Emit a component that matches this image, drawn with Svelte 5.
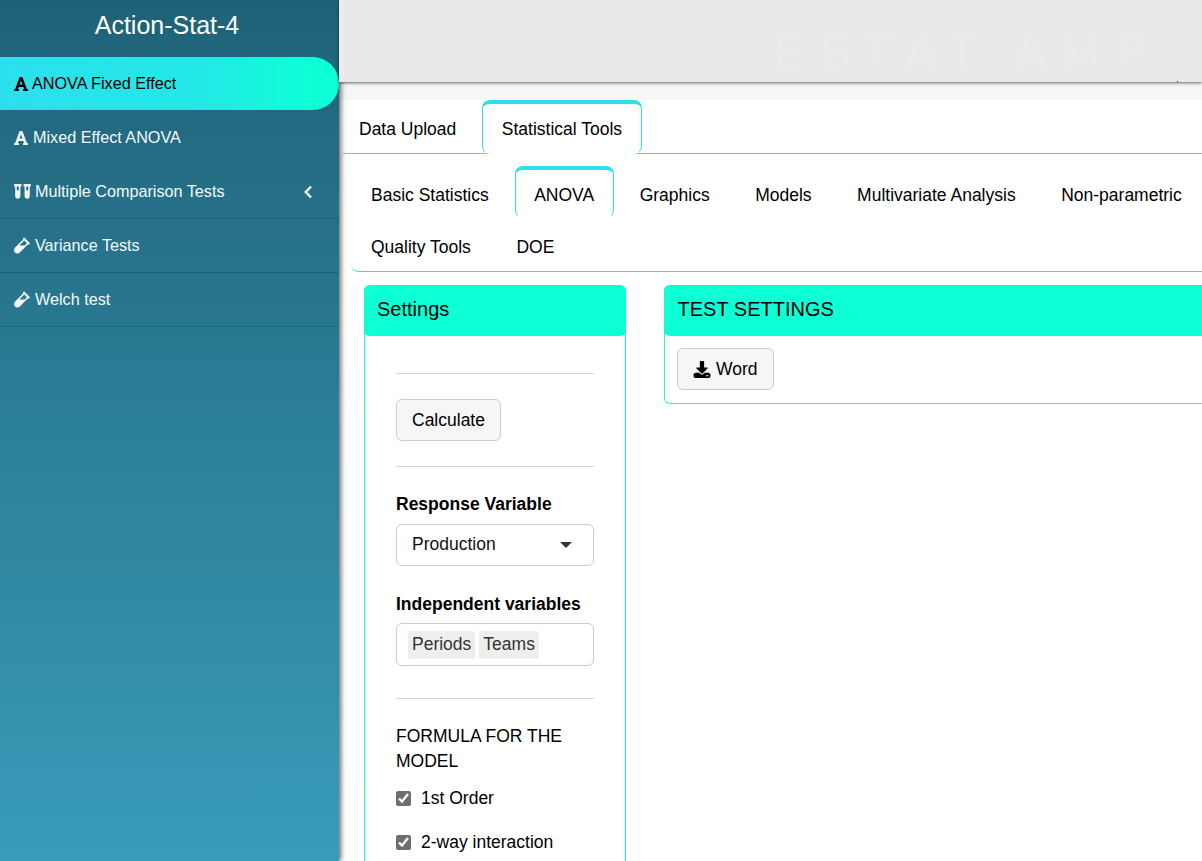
<script lang="ts">
	const icons = {
		font: { box: '0 32 448 448', d: 'M432 416h-23.41L277.88 53.69A32 32 0 0 0 247.58 32h-47.16a32 32 0 0 0-30.3 21.69L39.41 416H16a16 16 0 0 0-16 16v32a16 16 0 0 0 16 16h128a16 16 0 0 0 16-16v-32a16 16 0 0 0-16-16h-19.58l23.3-64h152.56l23.3 64H304a16 16 0 0 0-16 16v32a16 16 0 0 0 16 16h128a16 16 0 0 0 16-16v-32a16 16 0 0 0-16-16zM176.85 272L224 142.51 271.15 272z', kind: 'font' },
		vial: { box: '0 0 480 512', d: 'M477.7 186.1L309.5 18.3c-3.1-3.1-8.2-3.1-11.3 0l-34 33.9c-3.1 3.1-3.1 8.2 0 11.3l11.2 11.1L33 316.5c-38.8 38.7-45.1 102-9.4 143.5 20.6 24 49.5 36 78.4 35.9 26.4 0 52.8-10 72.9-30.1l246.3-245.7 11.2 11.1c3.1 3.1 8.2 3.1 11.3 0l34-33.9c3-3.1 3-8.1-.1-11.2zM318 256H161l148-147.7 78.5 78.3L318 256z', kind: 'vial' },
		vials: { box: '60 0 520 390', d: 'M72 64h24v240c0 44.1 35.9 80 80 80s80-35.9 80-80V64h24c4.4 0 8-3.6 8-8V8c0-4.4-3.6-8-8-8H72c-4.4 0-8 3.6-8 8v48c0 4.4 3.6 8 8 8zm72 0h64v96h-64V64zM360 64h24v240c0 44.1 35.9 80 80 80s80-35.9 80-80V64h24c4.4 0 8-3.6 8-8V8c0-4.4-3.6-8-8-8H360c-4.4 0-8 3.6-8 8v48c0 4.4 3.6 8 8 8zm72 0h64v96h-64V64z', kind: 'vials' }
	};

	const menu = [
		{ label: 'ANOVA Fixed Effect', icon: icons.font, active: true },
		{ label: 'Mixed Effect ANOVA', icon: icons.font },
		{ label: 'Multiple Comparison Tests', icon: icons.vials, chevron: true },
		{ label: 'Variance Tests', icon: icons.vial },
		{ label: 'Welch test', icon: icons.vial }
	];

	const topTabs = ['Data Upload', 'Statistical Tools'];
	const subTabs = ['Basic Statistics', 'ANOVA', 'Graphics', 'Models', 'Multivariate Analysis', 'Non-parametric', 'Quality Tools', 'DOE'];
</script>

<div class="page">
	<aside class="sidebar">
		<div class="brand">Action-Stat-4</div>
		<nav>
			{#each menu as item}
				<div class="item" class:active={item.active}>
					<svg class="icon {item.icon.kind}" viewBox={item.icon.box} preserveAspectRatio="none" aria-hidden="true"><path fill="currentColor" d={item.icon.d} /></svg>
					<span>{item.label}</span>
					{#if item.chevron}
						<svg class="chevron" viewBox="0 0 10 14" aria-hidden="true"><path d="M8 1.5 2.8 7 8 12.5" fill="none" stroke="currentColor" stroke-width="2.4" /></svg>
					{/if}
				</div>
			{/each}
		</nav>
	</aside>

	<main class="main">
		<header class="topbar">
			<span class="watermark">ESTAT AMP</span>
			<i class="speck"></i>
		</header>
		<div class="band"></div>

		<div class="tabs top">
			{#each topTabs as tab}
				<div class="tab" class:active={tab === 'Statistical Tools'}>{tab}</div>
			{/each}
		</div>

		<div class="tabs sub">
			{#each subTabs as tab}
				<div class="tab" class:active={tab === 'ANOVA'}>{tab}</div>
			{/each}
		</div>

		<div class="content">
			<section class="card settings">
				<h2>Settings</h2>
				<div class="card-body">
					<hr />
					<button type="button">Calculate</button>
					<hr />
					<p class="label">Response Variable</p>
					<div class="field select">
						<span>Production</span>
						<i class="caret"></i>
					</div>
					<p class="label second">Independent variables</p>
					<div class="field chips">
						<span class="chip">Periods</span>
						<span class="chip">Teams</span>
					</div>
					<hr class="wide-gap" />
					<p class="formula">FORMULA FOR THE MODEL</p>
					<label class="check"><input type="checkbox" checked /> 1st Order</label>
					<label class="check"><input type="checkbox" checked /> 2-way interaction</label>
				</div>
			</section>

			<section class="card results">
				<h2>TEST SETTINGS</h2>
				<div class="results-body">
					<button type="button">
						<svg viewBox="0 0 512 512" aria-hidden="true"><path fill="currentColor" fill-rule="evenodd" d="M216 0h80c13.3 0 24 10.7 24 24v168h87.7c17.8 0 26.7 21.5 14.1 34.1L269.7 378.3c-7.5 7.5-19.8 7.5-27.3 0L90.1 226.1c-12.6-12.6-3.7-34.1 14.1-34.1H192V24c0-13.3 10.7-24 24-24zM70 352h100l49 49c20 20 52 20 72 0l49-49h102c38 0 70 32 70 70v20c0 38-32 70-70 70H70c-38 0-70-32-70-70v-20c0-38 32-70 70-70zm310 76v34h74v-34z" /></svg>
						Word
					</button>
				</div>
			</section>
		</div>
	</main>
</div>

<style>
	:global(body) {
		margin: 0;
		font-family: 'Liberation Sans', Arial, sans-serif;
		color: #000;
		background: #fff;
	}

	.page {
		display: flex;
		height: 861px;
		overflow: hidden;
	}

	.sidebar {
		flex: 0 0 339px;
		position: relative;
		z-index: 1;
		background: linear-gradient(#1f6278, #399cb9);
		box-shadow: 2px 0 5px rgba(0, 0, 0, 0.6);
		color: #f4f8fa;
	}

	.brand {
		height: 57px;
		padding: 0 5px 6px 0;
		box-sizing: border-box;
		display: flex;
		align-items: center;
		justify-content: center;
		font-size: 25px;
		color: #fff;
	}

	.item {
		height: 54px;
		box-sizing: border-box;
		padding: 0 14px;
		display: flex;
		align-items: center;
		gap: 4px;
		font-size: 16.2px;
		border-bottom: 1px solid rgba(20, 70, 100, 0.4);
	}

	.item:nth-child(-n + 2) {
		border-bottom-color: transparent;
	}

	.item.active {
		height: 53px;
		margin-bottom: 1px;
		padding-top: 1px;
		gap: 3px;
		color: #000;
		background: linear-gradient(90deg, #2cdfee 0%, #22e8e6 60%, #0dffd6 92%);
		border-radius: 0 27px 27px 0;
	}

	.icon {
		flex: none;
	}

	.icon.font {
		width: 14px;
		height: 14px;
		margin-right: 1px;
	}

	.icon.vial {
		width: 16px;
		height: 17px;
		margin-right: 1px;
	}

	.icon.vials {
		width: 17px;
		height: 15px;
	}

	.chevron {
		width: 10px;
		height: 14px;
		margin-left: auto;
		margin-right: 12px;
	}

	.main {
		flex: 1;
		min-width: 0;
	}

	.topbar {
		position: relative;
		z-index: 2;
		height: 82px;
		box-sizing: border-box;
		padding-left: 429px;
		border-left: 5px solid #ececec;
		background: #e9e9e9;
		box-shadow: 0 1px 3px rgba(0, 0, 0, 0.6);
		overflow: hidden;
		white-space: nowrap;
	}

	.watermark {
		display: block;
		padding-top: 27px;
		font-size: 48px;
		line-height: 50px;
		letter-spacing: 14px;
		color: #ebebeb;
	}

	.speck {
		position: absolute;
		left: 833px;
		bottom: 0;
		width: 1px;
		height: 1px;
		background: #222;
	}

	.band {
		height: 18px;
		background: #f6f6f6;
	}

	.tabs {
		display: flex;
		flex-wrap: wrap;
		font-size: 17.5px;
	}

	.top {
		padding-left: 0.5px;
		height: 54px;
		box-sizing: border-box;
		border-bottom: 1px solid #2ddfee;
		margin-left: 4px;
	}

	.top .tab:first-child {
		margin-left: -4px;
		border-bottom-color: transparent;
		background: none;
	}

	.sub {
		margin: 12px 0 0 12px;
		padding-left: 0.5px;
		border-bottom: 1px solid #2ddfee;
		border-bottom-left-radius: 8px;
		height: 106px;
		box-sizing: border-box;
		width: 900px;
	}

	.tab {
		height: 52px;
		box-sizing: border-box;
		padding: 3px 18.5px 0;
		margin-right: 6.5px;
		display: flex;
		align-items: center;
		border: 1px solid transparent;
		border-top-width: 4px;
		border-radius: 8px;
		white-space: nowrap;
	}

	.top .tab {
		height: 54px;
		padding-top: 1px;
	}

	.tab.active {
		border-color: #2ddfee;
		border-bottom-color: #fff;
		background: #fff;
	}

	.content {
		display: flex;
		gap: 38px;
		margin: 13px -20px 0 25px;
		align-items: flex-start;
	}

	.card {
		box-sizing: border-box;
		border: 1px solid #0dffd6;
		border-top: 0;
		border-radius: 6px;
	}

	.card h2 {
		margin: 0 -1px;
		height: 51px;
		box-sizing: border-box;
		padding: 0 13px 3px;
		display: flex;
		align-items: center;
		font-size: 20px;
		font-weight: 400;
		background: #0dffd6;
		border-radius: 6px;
	}

	.results h2 {
		padding-left: 13.5px;
	}

	.settings {
		flex: 0 0 262px;
		height: 700px;
	}

	.results {
		flex: 1;
		border-color: #2cefd8;
	}

	.card-body {
		padding: 37px 31px 0;
	}

	.results-body {
		padding: 12px 12px 13px;
	}

	hr {
		margin: 0 0 25px;
		border: 0;
		border-top: 1px solid #d4d4d4;
	}

	button {
		display: flex;
		align-items: center;
		gap: 5px;
		height: 42px;
		padding: 0 15px;
		margin-bottom: 25px;
		font: inherit;
		font-size: 17.5px;
		color: #000;
		background: #f6f6f6;
		border: 1px solid #ccc;
		border-radius: 6px;
	}

	.results-body button {
		margin-bottom: 0;
	}

	button svg {
		width: 18px;
		height: 17px;
	}

	.label {
		margin: 0 0 7px;
		font-size: 17.5px;
		line-height: 25px;
		font-weight: 700;
	}

	.second {
		margin-top: 26px;
		margin-bottom: 6px;
	}

	.field {
		box-sizing: border-box;
		font-size: 17.5px;
		border: 1px solid #ccc;
		border-radius: 6px;
	}

	.select {
		height: 42px;
		padding: 0 21px 2px 15px;
		display: flex;
		align-items: center;
		justify-content: space-between;
		color: #111;
	}

	.caret {
		width: 0;
		height: 0;
		margin-top: 1px;
		border: 6.5px solid transparent;
		border-top-color: #333;
		border-bottom-width: 0;
	}

	.chips {
		height: 43px;
		padding: 0 11px;
		display: flex;
		align-items: center;
		gap: 4px;
	}

	.chip {
		height: 28px;
		padding: 0 4px;
		display: flex;
		align-items: center;
		color: #333;
		background: #eee;
		border-radius: 3px;
	}

	.wide-gap {
		margin-top: 32px;
		margin-bottom: 25px;
	}

	.formula {
		margin: 0 0 10px;
		font-size: 17.5px;
		line-height: 25px;
	}

	.check {
		display: flex;
		align-items: center;
		gap: 10px;
		height: 28px;
		margin-bottom: 16px;
		font-size: 17.5px;
		white-space: nowrap;
	}

	.check input {
		width: 15px;
		height: 15px;
		margin: 0;
		accent-color: #6e6e6e;
	}
</style>
